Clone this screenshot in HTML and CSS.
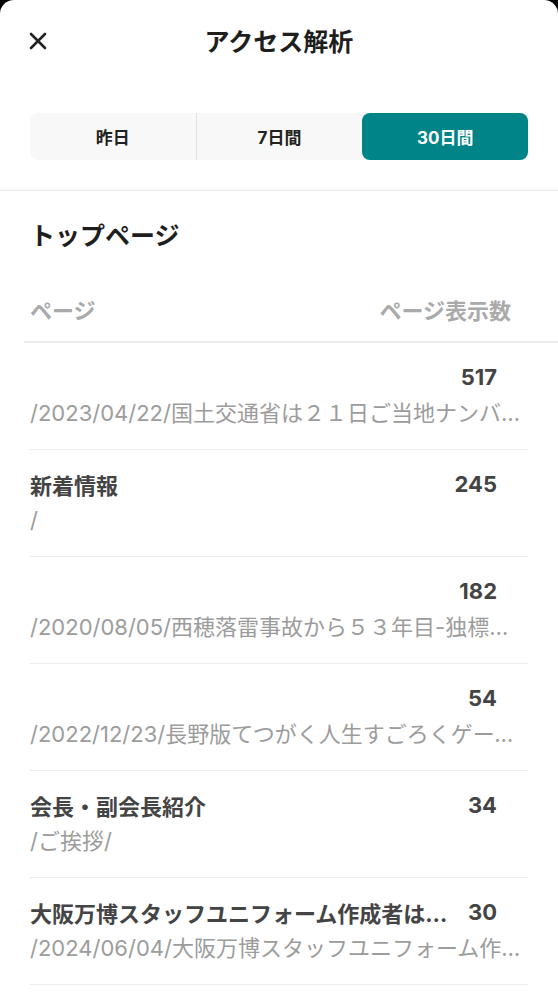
FILE: index.html
```html
<!DOCTYPE html>
<html lang="ja">
<head>
    <meta charset="UTF-8">
    <meta name="viewport" content="width=device-width, initial-scale=1.0">
    <title>アクセス解析</title>
    <link rel="stylesheet" href="styles.css">
</head>
<body>

    <div class="sheet">
        <header class="header">
            <button class="close-btn" aria-label="閉じる">
                <svg width="20" height="20" viewBox="0 0 20 20">
                    <path d="M3 3 L17 17 M17 3 L3 17" stroke="#222" stroke-width="2.6" stroke-linecap="round" fill="none"/>
                </svg>
            </button>
            <h1>アクセス解析</h1>
        </header>

        <div class="tabs">
            <button class="tab">昨日</button>
            <button class="tab">7日間</button>
            <button class="tab active">30日間</button>
        </div>

        <section class="ranking">
            <h2>トップページ</h2>

            <div class="table-head">
                <span>ページ</span>
                <span>ページ表示数</span>
            </div>

            <ul class="rows">
                <li class="row">
                    <div class="row-main">
                        <span class="row-title"></span>
                        <span class="row-count">517</span>
                    </div>
                    <div class="row-path">/2023/04/22/国土交通省は２１日ご当地ナンバープレートの図柄を発表した</div>
                </li>
                <li class="row">
                    <div class="row-main">
                        <span class="row-title">新着情報</span>
                        <span class="row-count">245</span>
                    </div>
                    <div class="row-path">/</div>
                </li>
                <li class="row">
                    <div class="row-main">
                        <span class="row-title"></span>
                        <span class="row-count">182</span>
                    </div>
                    <div class="row-path">/2020/08/05/西穂落雷事故から５３年目-独標に慰霊碑</div>
                </li>
                <li class="row">
                    <div class="row-main">
                        <span class="row-title"></span>
                        <span class="row-count">54</span>
                    </div>
                    <div class="row-path">/2022/12/23/長野版てつがく人生すごろくゲームを作りました</div>
                </li>
                <li class="row">
                    <div class="row-main">
                        <span class="row-title">会長・副会長紹介</span>
                        <span class="row-count">34</span>
                    </div>
                    <div class="row-path">/ご挨拶/</div>
                </li>
                <li class="row">
                    <div class="row-main">
                        <span class="row-title">大阪万博スタッフユニフォーム作成者は長野県出身</span>
                        <span class="row-count">30</span>
                    </div>
                    <div class="row-path">/2024/06/04/大阪万博スタッフユニフォーム作成者は長野県出身</div>
                </li>
            </ul>
        </section>
    </div>

</body>
</html>
```

FILE: styles.css
```css
body {
    font-family: Inter, "Noto Sans CJK JP", sans-serif;
    background: #000;
    margin: 0;
    padding: 0;
    color: #222;
}

.sheet {
    background: #fff;
    min-height: 1000px;
    border-radius: 14px 14px 0 0;
    overflow: hidden;
}

.header {
    position: relative;
    height: 84px;
    display: flex;
    align-items: center;
    justify-content: center;
}

.header h1 {
    margin: 0;
    font-size: 25px;
    font-weight: 700;
    line-height: 1;
    color: #1e1e1e;
}

.close-btn {
    position: absolute;
    left: 28px;
    top: 31px;
    width: 20px;
    height: 20px;
    padding: 0;
    border: none;
    background: none;
    cursor: pointer;
}

.close-btn svg {
    display: block;
}

.tabs {
    display: flex;
    margin: 29px 30px 0;
    height: 47px;
    background: #f8f8f8;
    border-radius: 8px;
}

.tab {
    flex: 1;
    border: none;
    background: none;
    font-family: inherit;
    font-size: 17px;
    font-weight: 700;
    color: #222;
    padding: 0;
    cursor: pointer;
}

.tab + .tab {
    border-left: 1px solid #e3e3e3;
}

.tab.active {
    background: #008487;
    color: #fff;
    border-radius: 8px;
    border-left: none;
}

.ranking {
    margin-top: 30px;
    border-top: 1px solid #e8e8e8;
}

.ranking h2 {
    margin: 28px 30px 0;
    font-size: 25px;
    font-weight: 700;
    line-height: 34px;
    color: #1e1e1e;
}

.table-head {
    display: flex;
    justify-content: space-between;
    margin: 43px 0 0 24px;
    padding: 0 47px 15px 6px;
    font-size: 22px;
    font-weight: 700;
    line-height: 30px;
    color: #aaa;
    border-bottom: 2px solid #ebebeb;
}

.rows {
    list-style: none;
    margin: 0 30px;
    padding: 0;
}

.row {
    padding: 16px 0 18px;
    border-bottom: 1px solid #ececec;
}

.row-main {
    display: flex;
    align-items: center;
    height: 36px;
}

.row-title {
    flex: 1;
    min-width: 0;
    margin-right: 4px;
    font-size: 22px;
    font-weight: 700;
    color: #444;
    white-space: nowrap;
    overflow: hidden;
    text-overflow: ellipsis;
}

.row-count {
    width: 45px;
    padding-right: 31px;
    text-align: right;
    font-size: 22px;
    font-weight: 700;
    color: #444;
}

.row-path {
    height: 36px;
    line-height: 36px;
    font-size: 22px;
    color: #9c9c9c;
    white-space: nowrap;
    overflow: hidden;
    text-overflow: ellipsis;
}
```
